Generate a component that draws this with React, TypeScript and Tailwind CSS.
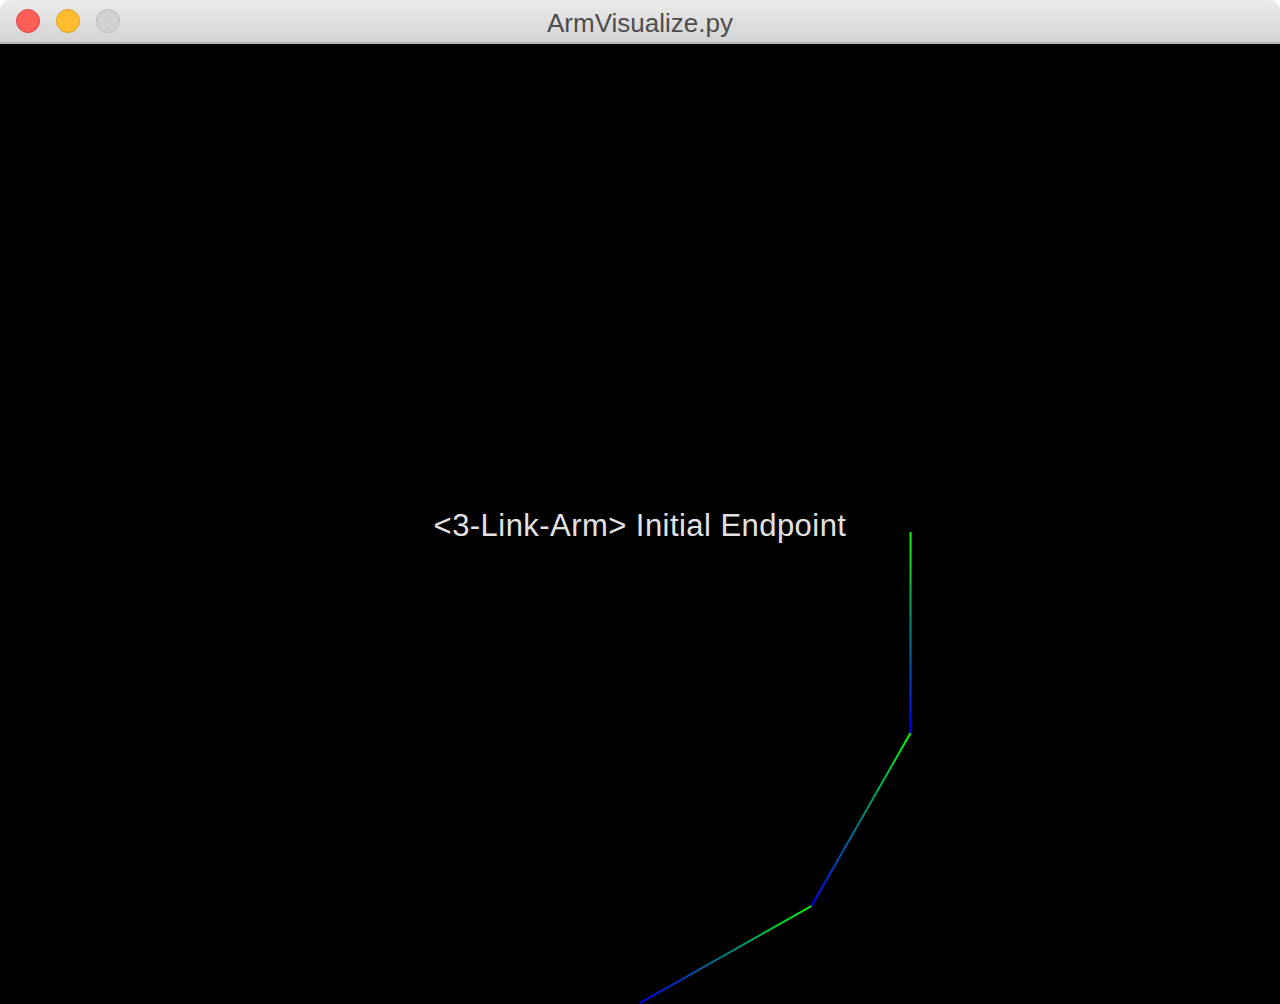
import React from 'react';

// one link of the arm: drawn blue at its base, green at its tip
const links = [
  { id: 'l1', x1: 640, y1: 1003, x2: 811.5, y2: 906 },
  { id: 'l2', x1: 811.5, y1: 906, x2: 910.5, y2: 733 },
  { id: 'l3', x1: 910.5, y1: 733, x2: 910.5, y2: 532 },
];

function TrafficLights() {
  return (
    <div className="flex items-center gap-4 pl-4">
      <span className="w-6 h-6 rounded-full bg-[#fd5f57] border border-[#df4744]" />
      <span className="w-6 h-6 rounded-full bg-[#febc2e] border border-[#dea123]" />
      <span className="w-6 h-6 rounded-full bg-[#d0d0d0] border border-[#bcbcbc]" />
    </div>
  );
}

export default function App() {
  return (
    <div className="w-[1280px] h-[1004px] bg-white overflow-hidden flex flex-col">
      {/* title bar */}
      <div className="relative h-[44px] shrink-0 rounded-t-[10px] bg-gradient-to-b from-[#ebebeb] to-[#d3d3d3] border-b-2 border-[#b4b4b4] flex items-center">
        <TrafficLights />
        <div className="absolute inset-0 flex items-center justify-center text-[26px] text-[#4d4d4d] font-['Liberation_Sans',Arial,sans-serif] leading-none pt-[3px]">
          ArmVisualize.py
        </div>
      </div>

      {/* GL canvas */}
      <div className="relative flex-1 bg-black">
        <div className="absolute left-0 right-0 top-[466px] text-center text-[31px] leading-none tracking-[0.45px] text-[#e2e2e2] font-['Liberation_Sans',Arial,sans-serif]">
          &lt;3-Link-Arm&gt; Initial Endpoint
        </div>
        <svg className="absolute inset-0" width="1280" height="960" viewBox="0 44 1280 960">
          <defs>
            {links.map((l) => (
              <linearGradient key={l.id} id={l.id} gradientUnits="userSpaceOnUse" x1={l.x1} y1={l.y1} x2={l.x2} y2={l.y2}>
                <stop offset="0" stopColor="#0000ff" />
                <stop offset="1" stopColor="#00ff00" />
              </linearGradient>
            ))}
          </defs>
          {links.map((l) => (
            <line key={l.id} x1={l.x1} y1={l.y1} x2={l.x2} y2={l.y2} stroke={`url(#${l.id})`} strokeWidth="2" />
          ))}
        </svg>
      </div>
    </div>
  );
}
